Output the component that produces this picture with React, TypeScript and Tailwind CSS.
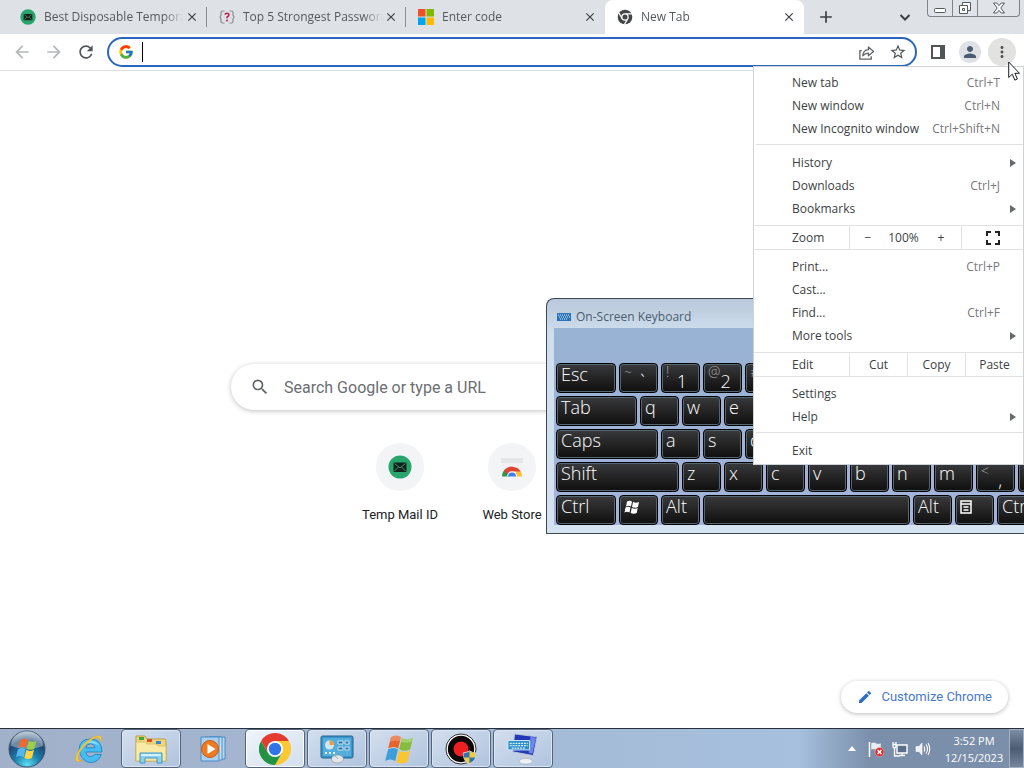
import type { ReactNode } from "react";
import { FcGoogle } from "react-icons/fc";
import {
  MdAdd,
  MdArrowBack,
  MdArrowForward,
  MdClose,
  MdEdit,
  MdMoreVert,
  MdPerson,
  MdRefresh,
  MdSearch,
  MdStarBorder,
} from "react-icons/md";

const MailLogo = ({ className }: { className: string }) => (
  <svg viewBox="0 0 24 24" className={className}>
    <circle cx="12" cy="12" r="11.5" fill="#27a56d" />
    <rect x="5.5" y="7.5" width="13" height="9.5" rx="1" fill="#10231b" />
    <path d="M6.5 8.5l5.5 4.5 5.5-4.5M6.5 16l4-4M17.5 16l-4-4" fill="none" stroke="#4f8a6f" strokeWidth="1" />
  </svg>
);

const PasswordLogo = () => (
  <svg viewBox="0 0 16 16" className="size-4">
    <path d="M5.500 2H3.500Q2 2 2 3.500V6L1 8l1 2v2.500Q2 14 3.500 14h2M10.500 2h2Q14 2 14 3.500V6l1 2-1 2v2.500Q14 14 12.500 14h-2" fill="none" stroke="#8b8d96" strokeWidth="1.200" />
    <path d="M6 5.600Q6.200 4.200 8 4.200t2 1.600Q10 7 8 8.200v1" fill="none" stroke="#c41e4c" strokeWidth="1.600" />
    <circle cx="8" cy="11.500" r="1" fill="#c41e4c" />
  </svg>
);

const MicrosoftLogo = () => (
  <svg viewBox="0 0 16 16" className="size-4">
    <path d="M0 0h7.500v7.500H0z" fill="#f25022" />
    <path d="M8.500 0H16v7.500H8.500z" fill="#7fba00" />
    <path d="M0 8.500h7.500V16H0z" fill="#00a4ef" />
    <path d="M8.500 8.500H16V16H8.500z" fill="#ffb900" />
  </svg>
);

const ChromeMono = () => (
  <svg viewBox="0 0 24 24" className="size-4">
    <circle cx="12" cy="12" r="11" fill="#43464b" />
    <circle cx="12" cy="12" r="5.600" fill="#fff" />
    <path d="M12 7.200h10.500M7.800 14.400L2.600 5.400M16.200 14.400l-5.200 9" stroke="#fff" strokeWidth="1.800" />
    <circle cx="12" cy="12" r="3.800" fill="#43464b" />
  </svg>
);

const ChromeColor = () => (
  <svg viewBox="0 0 48 48" className="size-8">
    <path d="M24 12h20.800A24 24 0 0 1 24 48l10.400-18z" fill="#fcc934" />
    <path d="M13.600 30L3.200 12A24 24 0 0 0 24 48l10.400-18z" fill="#229342" />
    <path d="M3.200 12l10.400 18L24 12h20.800A24 24 0 0 0 3.200 12z" fill="#e33b2e" />
    <circle cx="24" cy="24" r="12" fill="#fff" />
    <circle cx="24" cy="24" r="9.300" fill="#2f74e8" />
  </svg>
);

const WebStoreLogo = () => (
  <svg viewBox="0 0 24 24" className="size-6">
    <path d="M1 3h22l-1 18H2z" fill="#f1f2f3" />
    <path d="M1 3h22v5H1z" fill="#e4e7e8" />
    <path d="M2 21.500a10 10 0 0 1 4-8l4 8z" fill="#2b9a4a" />
    <path d="M22 21.500a10 10 0 0 0-4-8l-4 8z" fill="#fbc02d" />
    <path d="M4 15.500a10 10 0 0 1 16.500 1H12a5 5 0 0 0-5 3z" fill="#e04434" />
    <path d="M7 21.500a5 5 0 0 1 10 0z" fill="#fff" />
    <path d="M8 21.500a4 4 0 0 1 8 0z" fill="#3f7df0" />
  </svg>
);

const WindowsFlag = ({ className }: { className: string }) => (
  <svg viewBox="0 0 32 32" className={className}>
    <path d="M8 4q5-3 10 0l-2.800 11.500q-5-3-10 0z" fill="#e8622c" />
    <path d="M19 4.800q5 3 11 0l-2.800 11.500q-5.500 3-11 0z" fill="#86bd3c" />
    <path d="M5 16.500q5-3 10 0l-2.800 11.500q-5-3-10 0z" fill="#3d9edb" />
    <path d="M16 17.500q5 3 11 0l-2.800 11.500q-5.500 3-11 0z" fill="#fac533" />
    <path d="M8 4q5-3 10 0l-1 4q-6-1-10 1zM19 4.800q5 3 11 0l-1 4q-6 2-11 0z" fill="#fff" opacity=".25" />
  </svg>
);

const StartOrb = () => (
  <svg viewBox="0 0 40 40" className="size-10">
    <defs>
      <radialGradient id="orb" cx=".5" cy=".95" r=".9">
        <stop offset="0" stopColor="#5fe0f5" />
        <stop offset=".4" stopColor="#1d7fae" />
        <stop offset=".75" stopColor="#20466f" />
        <stop offset="1" stopColor="#8fa6bd" />
      </radialGradient>
    </defs>
    <circle cx="20" cy="20" r="18" fill="url(#orb)" stroke="#3b546f" />
    <path d="M4 17a16 15 0 0 1 32 0q-16 6-32 0z" fill="#fff" opacity=".35" />
    <g transform="translate(7 7) scale(.8)">
      <path d="M8 5q5-3 9.500 0L15 15q-5-3-9.500 0z" fill="#ee6b2f" />
      <path d="M18.500 5.800q5 3 9.500 0l-2.500 10q-5 3-9.500 0z" fill="#9bcf4a" />
      <path d="M5 16.500q5-3 9.500 0l-2.500 10q-5-3-9.500 0z" fill="#55b7ef" />
      <path d="M15.500 17.300q5 3 9.500 0l-2.500 10q-5 3-9.500 0z" fill="#ffd446" />
    </g>
  </svg>
);

const ExplorerE = () => (
  <svg viewBox="0 0 32 32" className="size-8">
    <path d="M6 17.500Q6 6 17.500 6T29 19H13q.3 4.500 4.500 4.500 2.800 0 4-2h6.800Q25.500 29.500 17.500 29.500T6 17.500zM13 14.800h9q-.5-4-4.500-4t-4.500 4z" fill="#46bdf2" fillRule="evenodd" stroke="#1c7dbd" strokeWidth=".8" />
    <path d="M8 14q3-6 9.500-6 6 0 8.500 5-3-3-8.500-3T8 14z" fill="#fff" opacity=".45" />
    <path d="M28 9q2-6-2.500-6.300Q19 3 11 11 2 20.500 2.500 26.500 3.500 30.500 10 27q-5 1.500-5-2.500 0-5 8-13 8-7.500 12-7 2 .5 3 4.500z" fill="#f5cc35" stroke="#d79f1d" strokeWidth=".4" />
  </svg>
);

const FolderIcon = () => (
  <svg viewBox="0 0 36 32" className="h-8 w-9">
    <path d="M3 3h9l2 3h17q2 0 2 2v20H3z" fill="#efd67a" stroke="#bd9c3f" />
    <path d="M6 4h5v3H6z" fill="#45a53b" />
    <path d="M14 6h5v3h-5z" fill="#dc4b2e" />
    <path d="M23 8h5v3h-5z" fill="#3c86cf" />
    <path d="M3 9h9l2 2h9l2 2h8v15H3z" fill="#f8e9a4" stroke="#d3b65b" strokeWidth=".7" />
    <path d="M7 30V20h22v10h-5v-5H12v5z" fill="#8cd0ef" stroke="#4198c6" />
    <path d="M8 21h20v2H8z" fill="#d5f0fb" />
  </svg>
);

const MediaIcon = () => (
  <svg viewBox="0 0 32 32" className="size-8">
    <path d="M12 4h16v22H12z" fill="#b4d7f2" stroke="#4d8dc5" />
    <path d="M8 4h17v23H8z" fill="#c8e2f5" stroke="#4d8dc5" />
    <path d="M4 4h18v24H4z" fill="#a9d0ef" stroke="#4d8dc5" />
    <circle cx="13" cy="16" r="8.500" fill="#ee7a22" stroke="#cd5a10" />
    <path d="M10.500 11l8 5-8 5z" fill="#fff" />
  </svg>
);

const ControlPanelIcon = () => (
  <svg viewBox="0 0 36 32" className="h-8 w-9">
    <rect x="2" y="3" width="32" height="22" rx="1.500" fill="#3b94cb" stroke="#20658f" />
    <rect x="4" y="5" width="28" height="18" fill="#57add9" />
    <circle cx="10.500" cy="12" r="4.500" fill="#cfe8f5" />
    <path d="M10.500 12V7.500A4.500 4.500 0 0 1 15 12z" fill="#f19b3b" />
    <path d="M19 8h5v3h-5zM26 8h4v3h-4zM19 14h5v3h-5zM26 14h4v3h-4z" fill="#2a79ae" stroke="#e4f4fb" strokeWidth=".8" />
    <path d="M6 20h2M10 20h2M14 20h2" stroke="#e4f4fb" strokeWidth="2" />
    <ellipse cx="18.500" cy="26" rx="6" ry="4" fill="#e3e6e8" stroke="#8e999f" strokeWidth=".7" />
    <path d="M16 23l3 3" stroke="#a4aeb3" />
  </svg>
);

const RecorderIcon = () => (
  <svg viewBox="0 0 34 34" className="size-8">
    <circle cx="17" cy="17" r="16" fill="#fff" stroke="#1b1b1b" strokeWidth="1" />
    <circle cx="17" cy="17" r="14" fill="#0c0808" />
    <circle cx="17" cy="17" r="8" fill="#ee1f22" />
    <path d="M26 19q3 2 6.500 2 .500 9-6.500 12-7-3-6.500-12 3.500 0 6.500-2z" fill="#f2cd36" stroke="#c7d4dd" />
    <path d="M26 20v6h-6q-.4-3-.2-4.500Q23 21.500 26 20zM26 26h6q-1 4-6 6z" fill="#2f73b8" />
  </svg>
);

const OskIcon = () => (
  <svg viewBox="0 0 36 34" className="h-8 w-9">
    <path d="M9 1l24 3-4 20-22-4z" fill="#2439b7" stroke="#bfc9d6" />
    <path d="M26 4l6 1-4 17-4-1z" fill="#6b86e6" />
    <path d="M18 23l6 1v4h-6z" fill="#c8cfd6" />
    <ellipse cx="21" cy="30" rx="7" ry="3" fill="#eef1f3" stroke="#a2abb4" strokeWidth=".6" />
    <path d="M2 8h23v10H2z" fill="#2d8fca" stroke="#d8eef9" />
    <path d="M4 11h19M4 13.500h19M6 16h15" stroke="#dff2fb" strokeDasharray="2 1" strokeWidth="1.400" />
  </svg>
);

type TabInfo = { title: string; icon: ReactNode; active?: boolean; divider?: boolean };

const tabs: TabInfo[] = [
  { title: "Best Disposable Tempora", icon: <MailLogo className="size-4" />, divider: true },
  { title: "Top 5 Strongest Password", icon: <PasswordLogo />, divider: true },
  { title: "Enter code", icon: <MicrosoftLogo /> },
  { title: "New Tab", icon: <ChromeMono />, active: true },
];

const Tab = ({ title, icon, active, divider }: TabInfo) => (
  <div
    className={`relative flex w-[199px] items-center pl-3 pr-[7px] ${active ? "rounded-t-lg bg-white" : ""}`}
  >
    <span className="shrink-0">{icon}</span>
    <button className="ml-2 min-w-0 flex-1 overflow-hidden whitespace-nowrap text-left text-xs text-[#55595e] [mask-image:linear-gradient(to_right,black_120px,transparent_140px)]">
      {title}
    </button>
    <button aria-label={`Close ${title}`} className="flex size-4 shrink-0 items-center justify-center text-[#3c4043]">
      <MdClose className="size-[14px]" />
    </button>
    {divider && <span className="absolute right-0 h-5 w-px bg-[#8b8f94]" />}
  </div>
);

const TabStrip = () => (
  <div className="flex h-[34px] bg-[#dee1e6] pl-2">
    {tabs.map((tab) => (
      <Tab key={tab.title} {...tab} />
    ))}
    <button aria-label="New tab" className="ml-2 flex w-7 items-center justify-center text-[#3c4043]">
      <MdAdd className="size-5" />
    </button>
    <div className="flex-1" />
    <button aria-label="Search tabs" className="flex w-7 items-center justify-center text-[#3c4043]">
      <svg viewBox="0 0 12 12" className="size-3">
        <path d="M1.500 4L6 8.500 10.500 4" fill="none" stroke="currentColor" strokeWidth="2" />
      </svg>
    </button>
    <div className="ml-2 mr-1 flex h-[17px] rounded-b border border-t-0 border-[#7e838a] bg-[#e0e3e8]">
      <button aria-label="Minimize" className="flex w-[25px] items-center justify-center border-r border-[#7e838a]">
        <svg viewBox="0 0 12 12" className="size-3">
          <rect x=".5" y="6.500" width="11" height="4" rx="1" fill="#fff" stroke="#555a61" />
        </svg>
      </button>
      <button aria-label="Restore" className="flex w-[25px] items-center justify-center border-r border-[#7e838a]">
        <svg viewBox="0 0 14 14" className="size-[14px]">
          <path d="M4.500 1.500h8v8h-8z" fill="#fff" stroke="#555a61" />
          <path d="M1.500 4.500h8v8h-8z" fill="#fff" stroke="#555a61" />
          <path d="M4.500 7.500h2v2h-2z" fill="none" stroke="#555a61" />
        </svg>
      </button>
      <button aria-label="Close" className="flex w-[41px] items-center justify-center">
        <svg viewBox="0 0 14 12" className="h-3 w-[14px]">
          <path d="M1.500 1h3.300L7 3.600 9.200 1h3.300L8.800 6l3.700 5H9.200L7 8.400 4.800 11H1.500l3.700-5z" fill="#fff" stroke="#555a61" />
        </svg>
      </button>
    </div>
  </div>
);

const toolButton = "flex size-7 shrink-0 items-center justify-center rounded-full";

const Toolbar = () => (
  <div className="flex h-[37px] items-center gap-1 border-b border-[#dcdfdf] bg-white px-2">
    <button aria-label="Back" className={`${toolButton} text-[#b5b7ba]`}>
      <MdArrowBack className="size-5" />
    </button>
    <button aria-label="Forward" className={`${toolButton} text-[#b5b7ba]`}>
      <MdArrowForward className="size-5" />
    </button>
    <button aria-label="Reload" className={`${toolButton} text-[#505357]`}>
      <MdRefresh className="size-5" />
    </button>
    <div className="mx-[3px] flex h-[30px] min-w-0 flex-1 items-center rounded-full border-2 border-[#2a66bd] bg-white pl-[9px] pr-[7px]">
      <FcGoogle className="size-4 shrink-0" />
      <span className="ml-2 h-5 w-px bg-black" />
      <input aria-label="Address and search bar" className="min-w-0 flex-1 bg-transparent text-sm outline-none" />
      <button aria-label="Share this page" className="flex size-5 items-center justify-center text-[#5f6368]">
        <svg viewBox="0 0 18 18" className="size-[17px]">
          <path d="M4 7H2v9h12v-3" fill="none" stroke="currentColor" strokeWidth="1.400" />
          <path d="M5 12.500Q5.500 6.500 11 6V3l5.500 5-5.500 4.500V9.600Q7.500 9.500 5 12.500z" fill="none" stroke="currentColor" strokeWidth="1.300" strokeLinejoin="round" />
        </svg>
      </button>
      <button aria-label="Bookmark this tab" className="ml-3 flex size-5 items-center justify-center text-[#505357]">
        <MdStarBorder className="size-[18px]" />
      </button>
    </div>
    <button aria-label="Side panel" className={`${toolButton} text-[#505357]`}>
      <svg viewBox="0 0 14 14" className="size-[14px]">
        <path d="M1 1h12v12H1z" fill="#fff" stroke="currentColor" strokeWidth="2" />
        <path d="M9 1h4v12H9z" fill="currentColor" />
      </svg>
    </button>
    <button aria-label="Profile" className={toolButton}>
      <span className="flex size-[22px] items-center justify-center rounded-full bg-[#dee1e6] text-[#4d5b70]">
        <MdPerson className="size-[18px]" />
      </span>
    </button>
    <button aria-label="Customize and control" className={`${toolButton} bg-[#e2e2e0] text-[#505357]`}>
      <MdMoreVert className="size-[18px]" />
    </button>
  </div>
);

const MenuItem = ({ label, keys, more }: { label: string; keys?: string; more?: boolean }) => (
  <button role="menuitem" className="flex h-[23px] w-full items-center justify-between pl-[38px] pr-[7px] text-left leading-4">
    <span>{label}</span>
    {keys && <span className="mr-4 text-[#77797c]">{keys}</span>}
    {more && (
      <svg viewBox="0 0 6 8" className="h-2 w-[6px]">
        <path d="M0 0l6 4-6 4z" fill="#66696d" />
      </svg>
    )}
  </button>
);

const MenuRow = ({ label, children }: { label: string; children: ReactNode }) => (
  <div className="my-[5px] flex h-[25px] items-stretch border-y border-[#dfe1e3]">
    <span className="flex w-24 items-center border-r border-[#dfe1e3] pl-[38px]">{label}</span>
    {children}
  </div>
);

const MenuRule = () => <hr className="mb-[6px] ml-[2px] mt-1 border-[#dfe1e3]" />;

const BrowserMenu = () => (
  <div
    role="menu"
    className="absolute right-0 top-[66px] z-20 w-[271px] border border-[#cfd2d6] bg-white pb-[2px] pt-1 text-xs text-[#3c3f43]"
  >
    <MenuItem label="New tab" keys="Ctrl+T" />
    <MenuItem label="New window" keys="Ctrl+N" />
    <MenuItem label="New Incognito window" keys="Ctrl+Shift+N" />
    <MenuRule />
    <MenuItem label="History" more />
    <MenuItem label="Downloads" keys="Ctrl+J" />
    <MenuItem label="Bookmarks" more />
    <MenuRow label="Zoom">
      <button aria-label="Zoom out" className="w-9">−</button>
      <span className="flex-1 self-center text-center">100%</span>
      <button aria-label="Zoom in" className="w-10">+</button>
      <button aria-label="Full screen" className="flex w-[62px] items-center justify-center border-l border-[#dfe1e3]">
        <svg viewBox="0 0 14 14" className="size-[14px]">
          <path d="M1 5V1h4M9 1h4v4M13 9v4H9M5 13H1V9" fill="none" stroke="#202124" strokeWidth="2" />
        </svg>
      </button>
    </MenuRow>
    <MenuItem label="Print..." keys="Ctrl+P" />
    <MenuItem label="Cast..." />
    <MenuItem label="Find..." keys="Ctrl+F" />
    <MenuItem label="More tools" more />
    <MenuRow label="Edit">
      <button className="flex-1">Cut</button>
      <button className="flex-1 border-x border-[#dfe1e3]">Copy</button>
      <button className="flex-1">Paste</button>
    </MenuRow>
    <MenuItem label="Settings" />
    <MenuItem label="Help" more />
    <MenuRule />
    <MenuItem label="Exit" />
  </div>
);

const Shortcut = ({ label, children }: { label: string; children: ReactNode }) => (
  <a href="#" className="flex w-28 flex-col items-center">
    <span className="flex size-12 items-center justify-center rounded-full bg-[#f3f4f5]">{children}</span>
    <span className="mt-4 text-[13px] leading-4 text-[#202124]">{label}</span>
  </a>
);

const NewTabPage = () => (
  <main className="relative flex flex-1 flex-col items-center bg-white pt-[293px] font-[Roboto,sans-serif]">
    <label className="flex h-[46px] w-full max-w-[562px] items-center rounded-full bg-white pl-[19px] shadow-[0_1px_5px_rgba(32,33,36,0.28)]">
      <MdSearch className="size-5 shrink-0 text-[#5f6368]" />
      <input
        type="search"
        aria-label="Search"
        placeholder="Search Google or type a URL"
        className="ml-[14px] min-w-0 flex-1 bg-transparent pt-px text-base outline-none placeholder:text-[#6b6e72]"
      />
    </label>
    <div className="mt-[33px] flex">
      <Shortcut label="Temp Mail ID">
        <MailLogo className="size-6" />
      </Shortcut>
      <Shortcut label="Web Store">
        <WebStoreLogo />
      </Shortcut>
      <Shortcut label="Add shortcut">
        <MdAdd className="size-6 text-[#202124]" />
      </Shortcut>
    </div>
    <button className="absolute bottom-[15px] right-4 flex h-8 items-center gap-2 rounded-full bg-white px-4 text-[13px] text-[#4878cc] shadow-[0_1px_4px_rgba(32,33,36,0.3)]">
      <MdEdit className="size-4 text-[#2b6bcb]" />
      Customize Chrome
    </button>
  </main>
);

type KeyInfo = { label?: string; top?: string; width?: string; glyph?: ReactNode; name?: string };

const winGlyph = (
  <svg viewBox="0 0 16 14" className="mt-1 h-[14px] w-4">
    <path d="M3 1.500q2.500-1.500 5 0L7 6.500q-2.500-1.500-5 0zM9 2q3 1.300 6 0l-1 5q-3 1.300-6 0zM1.500 7.500q2.500-1.500 5 0l-1 5q-2.500-1.500-5 0zM7.700 8q3 1.300 6 0l-1 5q-3 1.300-6 0z" fill="#fff" />
  </svg>
);

const appsGlyph = (
  <svg viewBox="0 0 12 14" className="mt-1 h-[14px] w-3">
    <path d="M1 1h10v12H1zM1 4h10M3.500 7h5M3.500 10h5" fill="none" stroke="#fff" strokeWidth="1.500" />
  </svg>
);

const letters = (text: string): KeyInfo[] => text.split("").map((label) => ({ label }));

const keyRows: KeyInfo[][] = [
  [
    { label: "Esc", width: "w-[60px]" },
    { label: "`", top: "~" },
    { label: "1", top: "!" },
    { label: "2", top: "@" },
    { label: "3", top: "#" },
  ],
  [{ label: "Tab", width: "w-[81px]" }, ...letters("qwe")],
  [{ label: "Caps", width: "w-[102px]" }, ...letters("asd")],
  [{ label: "Shift", width: "w-[123px]" }, ...letters("zxcvbnm"), { label: ",", top: "<" }, { label: ".", top: ">" }],
  [
    { label: "Ctrl", width: "w-[60px]" },
    { name: "Windows", glyph: winGlyph },
    { label: "Alt" },
    { name: "Space", width: "w-[207px]" },
    { label: "Alt" },
    { name: "Menu", glyph: appsGlyph },
    { label: "Ctrl", width: "w-[60px]" },
  ],
];

const Key = ({ label, top, width = "w-[39px]", glyph, name }: KeyInfo) => (
  <button
    aria-label={name}
    className={`flex h-[30px] shrink-0 items-start overflow-hidden rounded border border-black bg-linear-to-b from-[#393a3c] via-[#242425] to-[#0f0f10] px-1 text-left text-lg leading-5 font-light text-white shadow-[inset_0_0_0_1px_#56666f] ${width}`}
  >
    {top ? (
      <>
        <span className="text-sm leading-4 text-[#a5a5a5]">{top}</span>
        <span className="ml-auto mr-2 mt-[7px]">{label}</span>
      </>
    ) : (
      label
    )}
    {glyph}
  </button>
);

const OnScreenKeyboard = () => (
  <section className="absolute left-[546px] right-0 top-[298px] z-10 overflow-hidden rounded-tl-lg border border-r-0 border-[#3c4754] bg-linear-to-b from-[#b9c8da] via-[#d0dfee] via-15% to-[#d5e2ef] pb-2 pl-[7px]">
    <h2 className="flex h-[29px] items-center gap-1 pl-[2px] pt-[6px] text-xs text-[#4a5c6e]">
      <svg viewBox="0 0 16 10" className="h-[10px] w-4">
        <path d="M1 1h14v8H1z" fill="#2b74b8" />
        <path d="M2 3h12M3 5h11M4 7h8" stroke="#d8ebf8" strokeDasharray="1 1" />
      </svg>
      On-Screen Keyboard
    </h2>
    <div className="flex flex-col gap-[3px] bg-linear-to-b from-[#98b3d3] to-[#a5b3da] pl-[2px] pt-[35px]">
      {keyRows.map((row, i) => (
        <div key={i} className="flex gap-[3px]">
          {row.map((key, j) => (
            <Key key={j} {...key} />
          ))}
        </div>
      ))}
    </div>
  </section>
);

const tasks: { name: string; icon: ReactNode; open?: boolean; active?: boolean }[] = [
  { name: "Internet Explorer", icon: <ExplorerE /> },
  { name: "Windows Explorer", icon: <FolderIcon />, open: true },
  { name: "Media Player", icon: <MediaIcon /> },
  { name: "Google Chrome", icon: <ChromeColor />, open: true, active: true },
  { name: "Control Panel", icon: <ControlPanelIcon />, open: true },
  { name: "Windows", icon: <WindowsFlag className="size-8" />, open: true },
  { name: "Recorder", icon: <RecorderIcon />, open: true },
  { name: "On-Screen Keyboard", icon: <OskIcon />, open: true },
];

const Taskbar = () => (
  <footer className="flex h-10 items-stretch border-t border-[#26303c] bg-linear-to-r from-[#a2b1ca] from-5% via-[#a6c0dd] via-78% to-[#7b8fab] to-85%">
    <button aria-label="Start" className="ml-[7px] flex w-10 items-center justify-center">
      <StartOrb />
    </button>
    <div className="ml-3 flex gap-[2px]">
      {tasks.map(({ name, icon, open, active }) => (
        <button
          key={name}
          aria-label={name}
          className={`flex w-[60px] items-center justify-center rounded-sm border ${
            active
              ? "border-[#54657b] bg-linear-to-br from-[#eff4fa] to-[#d3dfee] shadow-[inset_0_0_0_1px_#ffffff]"
              : open
                ? "border-[#54657b] bg-linear-to-br from-[#d3dfee] to-[#b0c3de] shadow-[inset_0_0_0_1px_#dbe6f2]"
                : "border-transparent"
          }`}
        >
          {icon}
        </button>
      ))}
    </div>
    <div className="ml-auto flex items-center text-white">
      <button aria-label="Show hidden icons" className="flex h-full w-5 items-center justify-center">
        <svg viewBox="0 0 8 5" className="h-[5px] w-2">
          <path d="M4 0l4 5H0z" fill="#fff" />
        </svg>
      </button>
      <button aria-label="Action Center" className="ml-[6px] flex size-4">
        <svg viewBox="0 0 16 16" className="size-4">
          <path d="M1.500 1v15" stroke="#fff" strokeWidth="1.500" />
          <path d="M3 2q3-1.500 5 0t5 0v7q-3 1.500-5 0t-5 0z" fill="#e9eef4" stroke="#7c8da3" strokeWidth=".5" />
          <circle cx="11.500" cy="11" r="4.500" fill="#d62b2b" stroke="#f3cccc" strokeWidth=".5" />
          <path d="M9.500 9l4 4M13.500 9l-4 4" stroke="#fff" strokeWidth="1.500" />
        </svg>
      </button>
      <button aria-label="Network" className="ml-2 flex size-4">
        <svg viewBox="0 0 16 16" className="size-4">
          <path d="M5 4h10v8H5z" fill="#5c6f8a" stroke="#fff" strokeWidth="1.400" />
          <path d="M7 14.500h6M10 12v3M2.500 7v8h5M1 1v3.500Q1 7 2.500 7T4 4.500V1M1 3.500h3" fill="none" stroke="#fff" strokeWidth="1.300" />
        </svg>
      </button>
      <button aria-label="Volume" className="ml-[7px] flex size-4">
        <svg viewBox="0 0 16 16" className="size-4">
          <path d="M1 5.500h3L7 2v12l-3-3.500H1z" fill="#eef2f6" stroke="#fff" strokeWidth=".6" />
          <path d="M9 5.500q1.500 2.500 0 5M11 3.500q3 4.500 0 9M13 2q3.500 6 0 12" fill="none" stroke="#fff" strokeWidth="1.100" />
        </svg>
      </button>
      <button className="ml-3 w-[62px] whitespace-nowrap text-center text-[11px] leading-[17px]">
        3:52 PM
        <br />
        12/15/2023
      </button>
      <button
        aria-label="Show desktop"
        className="ml-1 h-full w-[15px] border border-[#a3b1c3] bg-linear-to-b from-[#7d8da3] via-[#4c5d73] to-[#74859c]"
      />
    </div>
  </footer>
);

const App = () => (
  <div className="relative flex min-h-screen flex-col overflow-hidden bg-white font-['Open_Sans','Noto_Sans',sans-serif]">
    <TabStrip />
    <Toolbar />
    <NewTabPage />
    <Taskbar />
    <OnScreenKeyboard />
    <BrowserMenu />
    <svg viewBox="0 0 12 20" className="pointer-events-none absolute right-1 top-[61px] z-30 h-5 w-3">
      <path d="M.7 1v15.500l3.600-3.300 2.500 5.900 2.600-1.100-2.500-5.700h4.600z" fill="#fff" stroke="#1c1d2c" />
    </svg>
  </div>
);

export default App;
